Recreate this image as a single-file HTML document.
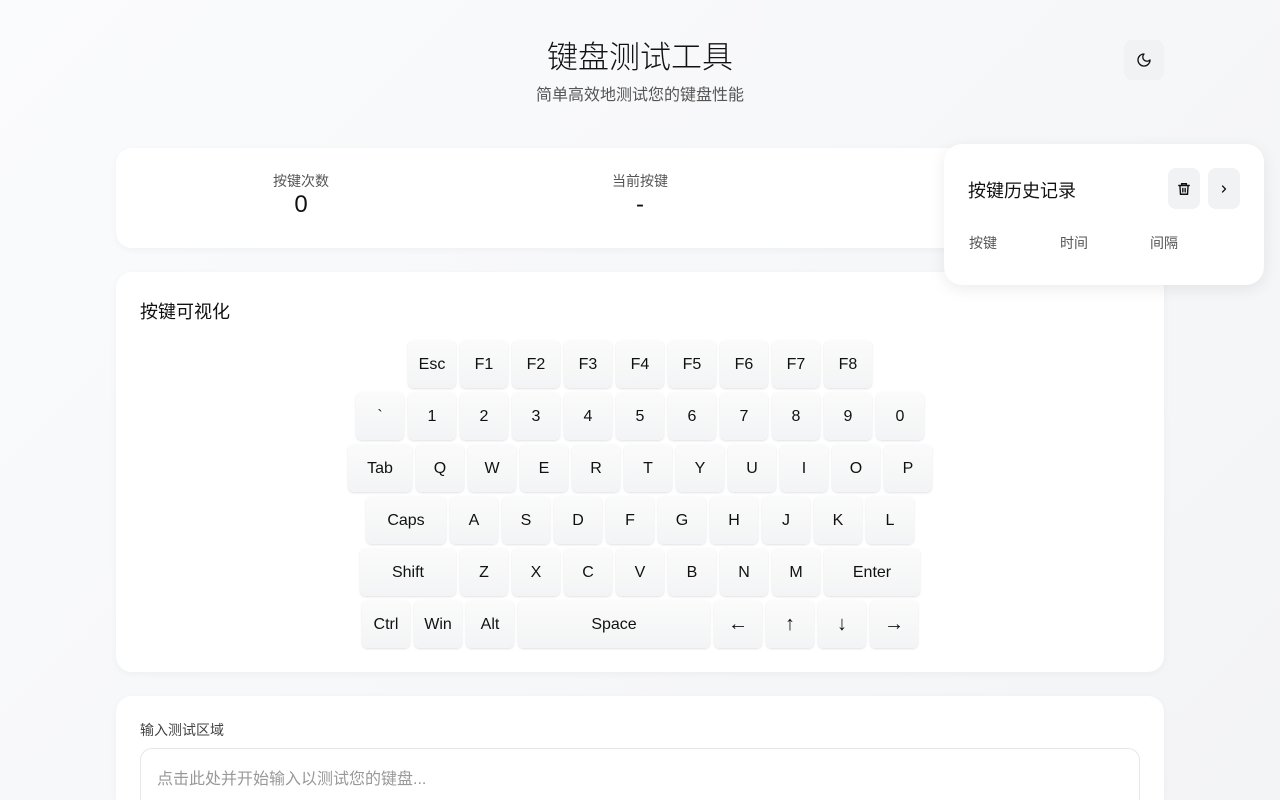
<!DOCTYPE html>
<html style="width:1280px;height:800px;overflow:hidden"><head><meta charset="utf-8"><style>
*{box-sizing:border-box;margin:0;padding:0}
body{width:1280px;height:800px;overflow:hidden;background:linear-gradient(135deg,#fafbfc,#f3f4f6);font-family:"Liberation Sans","Noto Sans CJK SC",sans-serif;color:#111;position:relative}
h1{position:absolute;top:37px;left:0;width:1280px;text-align:center;font-size:31px;font-weight:300;line-height:42px;color:#111}
.sub{position:absolute;top:85px;left:0;width:1280px;text-align:center;font-size:16px;color:#555;line-height:22px}
.moon{position:absolute;left:1124px;top:40px;width:40px;height:40px;border-radius:8px;background:#f1f2f4;display:flex;align-items:center;justify-content:center}
.card{position:absolute;left:116px;width:1048px;background:#fff;border-radius:16px;box-shadow:0 2px 8px rgba(0,0,0,.04);overflow:hidden}
.stat{position:absolute;top:24px;width:200px;text-align:center}
.stat .l{font-size:14px;color:#555;line-height:18px}
.stat .v{font-size:24px;line-height:30px}
.title{position:absolute;left:24px;top:26px;font-size:18px}
.kb{position:absolute;left:0;top:68px;width:1048px}
.row{display:flex;justify-content:center;gap:4px;margin-bottom:4px}
.k{width:48px;height:48px;border-radius:6px;background:linear-gradient(#fbfbfb,#f3f4f5);box-shadow:0 1px 2px rgba(0,0,0,.12);display:flex;align-items:center;justify-content:center;font-size:16px;color:#111;padding-top:1px}
.ar{font-size:20px}
.hist{position:absolute;left:944px;top:144px;width:320px;height:141px;background:#fff;border-radius:18px;box-shadow:0 4px 16px rgba(0,0,0,.08)}
.hb{position:absolute;top:24px;width:32px;height:41px;border-radius:8px;background:#f1f2f4;display:flex;align-items:center;justify-content:center}
.hh{position:absolute;top:89px;font-size:14px;color:#555}
</style></head><body>
<h1>键盘测试工具</h1>
<div class="sub">简单高效地测试您的键盘性能</div>
<div class="moon"><svg width="16" height="16" viewBox="0 0 24 24" fill="none" stroke="#111" stroke-width="2" stroke-linecap="round" stroke-linejoin="round"><path d="M12 3a6 6 0 0 0 9 9 9 9 0 1 1-9-9Z"/></svg></div>
<div class="card" style="top:148px;height:100px">
<div class="stat" style="left:85px"><div class="l">按键次数</div><div class="v">0</div></div>
<div class="stat" style="left:424px"><div class="l">当前按键</div><div class="v">-</div></div>
</div>
<div class="card" style="top:272px;height:400px">
<div class="title">按键可视化</div>
<div class="kb">
<div class="row"><div class="k">Esc</div><div class="k">F1</div><div class="k">F2</div><div class="k">F3</div><div class="k">F4</div><div class="k">F5</div><div class="k">F6</div><div class="k">F7</div><div class="k">F8</div></div>
<div class="row"><div class="k">`</div><div class="k">1</div><div class="k">2</div><div class="k">3</div><div class="k">4</div><div class="k">5</div><div class="k">6</div><div class="k">7</div><div class="k">8</div><div class="k">9</div><div class="k">0</div></div>
<div class="row"><div class="k" style="width:64px">Tab</div><div class="k">Q</div><div class="k">W</div><div class="k">E</div><div class="k">R</div><div class="k">T</div><div class="k">Y</div><div class="k">U</div><div class="k">I</div><div class="k">O</div><div class="k">P</div></div>
<div class="row"><div class="k" style="width:80px">Caps</div><div class="k">A</div><div class="k">S</div><div class="k">D</div><div class="k">F</div><div class="k">G</div><div class="k">H</div><div class="k">J</div><div class="k">K</div><div class="k">L</div></div>
<div class="row"><div class="k" style="width:96px">Shift</div><div class="k">Z</div><div class="k">X</div><div class="k">C</div><div class="k">V</div><div class="k">B</div><div class="k">N</div><div class="k">M</div><div class="k" style="width:96px">Enter</div></div>
<div class="row"><div class="k">Ctrl</div><div class="k">Win</div><div class="k">Alt</div><div class="k" style="width:192px">Space</div><div class="k ar">←</div><div class="k ar">↑</div><div class="k ar">↓</div><div class="k ar">→</div></div>
</div>
</div>
<div class="card" style="top:696px;height:104px;border-radius:16px 16px 0 0">
<div style="position:absolute;left:24px;top:24px;font-size:14px;color:#444">输入测试区域</div>
<div style="position:absolute;left:24px;top:52px;width:1000px;height:100px;border:1px solid #e5e7eb;border-radius:12px;padding:16px 16px;font-size:16px;color:#999">点击此处并开始输入以测试您的键盘...</div>
</div>
<div class="hist">
<div style="position:absolute;left:24px;top:33px;font-size:18px">按键历史记录</div>
<div class="hb" style="left:224px"><svg width="14" height="14" viewBox="0 0 24 24" fill="none" stroke="#111" stroke-width="2.4" stroke-linecap="round"><path d="M3 6h18M8 6V3h8v3M5 6l1 15h12l1-15M10 11v6M14 11v6"/></svg></div>
<div class="hb" style="left:264px"><svg width="12" height="12" viewBox="0 0 24 24" fill="none" stroke="#111" stroke-width="2.5" stroke-linecap="round" stroke-linejoin="round"><path d="M9 6l6 6-6 6"/></svg></div>
<div class="hh" style="left:25px">按键</div><div class="hh" style="left:116px">时间</div><div class="hh" style="left:206px">间隔</div>
</div>
</body></html>
